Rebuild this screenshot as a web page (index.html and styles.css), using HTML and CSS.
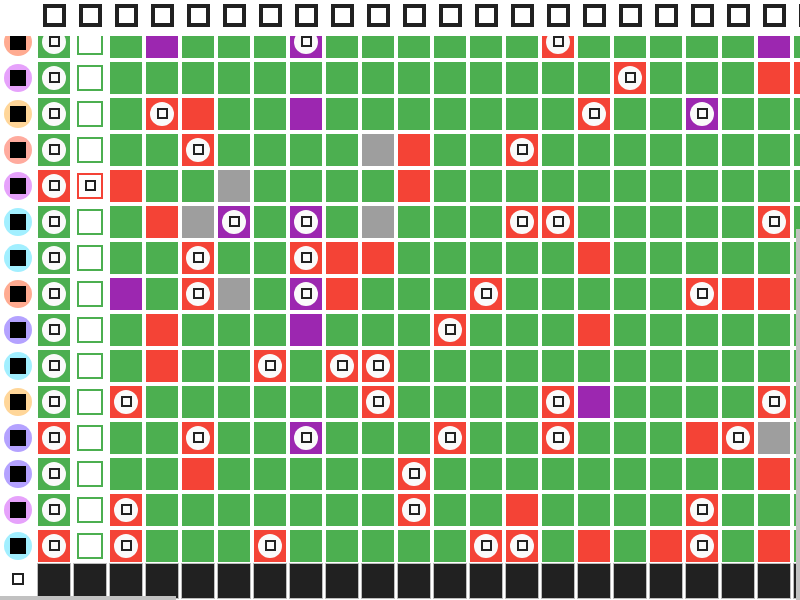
FILE: index.html
```html
<html>
    <head>
        <meta charset="UTF-8">
        <meta name="viewport" content="width=device-width, initial-scale=1.0">
        <title>Grid</title>
        <link rel="stylesheet" href="styles.css">
    </head>
    <body>
        <div id="sheet">
            <div id="head" class="row"></div>
            <div id="viewport">
                <div id="rows"></div>
            </div>
            <div id="foot" class="row"></div>
            <div class="scroll-v"></div>
            <div class="scroll-h"></div>
        </div>
        <script type="text/javascript">
            // avatar colour, first cell, box cell, then the day cells
            // upper case = plain cell, lower case = cell with a badge
            var data = [
                ["salmon", "g", "b", "GPGGGpGGGGGGrGGGGGPG"],
                ["violet", "g", "b", "GGGGGGGGGGGGGGrGGGRR"],
                ["orange", "g", "b", "GrRGGPGGGGGGGrGGpGGG"],
                ["pink",   "g", "b", "GGrGGGGYRGGrGGGGGGGG"],
                ["violet", "r", "x", "RGGYGGGGRGGGGGGGGGGG"],
                ["cyan",   "g", "b", "GRYpGpGYGGGrrGGGGGrG"],
                ["cyan",   "g", "b", "GGrGGrRRGGGGGRGGGGGG"],
                ["salmon", "g", "b", "PGrYGpRGGGrGGGGGrRRG"],
                ["lav",    "g", "b", "GRGGGPGGGrGGGRGGGGGG"],
                ["cyan",   "g", "b", "GRGGrGrrGGGGGGGGGGGG"],
                ["orange", "g", "b", "rGGGGGGrGGGGrPGGGGrG"],
                ["lav",    "r", "b", "GGrGGpGGGrGGrGGGRrYG"],
                ["lav",    "g", "b", "GGRGGGGGrGGGGGGGGGRG"],
                ["violet", "g", "b", "rGGGGGGGrGGRGGGGrGGG"],
                ["cyan",   "r", "b", "rGGGrGGGGGrrGRGRrGRG"]
            ];
            var colours = {g: "green", r: "red", p: "purple", y: "grey"};
            var COLS = 22;

            function el(cls, parent){
                var d = document.createElement("div");
                d.className = cls;
                if(parent) parent.appendChild(d);
                return d;
            }

            function cell(code, parent){
                var slot = el("slot", parent);
                var c = el("cell " + colours[code.toLowerCase()], slot);
                if(code != code.toUpperCase()){
                    var b = el("badge", c);
                    el("mini", b);
                }
            }

            var head = document.getElementById("head");
            el("lead", head);
            for(var i = 0; i < COLS; i++){
                var s = el("slot", head);
                el("hicon", s);
            }

            var rows = document.getElementById("rows");
            data.forEach(function(r){
                var row = el("row", rows);
                var lead = el("lead", row);
                var av = el("avatar " + r[0], lead);
                el("dot", av);
                cell(r[1], row);
                var slot = el("slot", row);
                var box = el("box" + (r[2] == "x" ? " alert" : ""), slot);
                if(r[2] == "x") el("mini", box);
                for(var i = 0; i < r[3].length; i++){
                    cell(r[3][i], row);
                }
            });

            var foot = document.getElementById("foot");
            var fl = el("lead", foot);
            el("ficon", fl);
            for(var i = 0; i < COLS; i++){
                var s = el("slot", foot);
                el("dark", s);
            }
        </script>
    </body>
</html>
```

FILE: styles.css
```css
body{
    margin: 0;
    padding: 0;
    font-family: "Liberation Sans", sans-serif;
    overflow: hidden;
}
#sheet{
    position: relative;
    width: 800px;
    height: 600px;
    overflow: hidden;
    background-color: #fff;
}
.row{
    display: flex;
    height: 36px;
}
.lead{
    flex: 0 0 36px;
    display: flex;
    align-items: center;
    justify-content: center;
}
.slot{
    flex: 0 0 36px;
    display: flex;
    align-items: center;
    justify-content: center;
}
#head .slot{
    align-items: flex-start;
    padding-top: 4px;
    box-sizing: border-box;
}
.hicon{
    width: 23px;
    height: 23px;
    box-sizing: border-box;
    border: 4px solid #212121;
}
#viewport{
    height: 526px;
    overflow: hidden;
}
#rows{
    margin-top: -12px;
}
.cell{
    width: 32px;
    height: 32px;
    display: flex;
    align-items: center;
    justify-content: center;
}
.green{
    background-color: #4caf50;
}
.red{
    background-color: #f44336;
}
.purple{
    background-color: #9c27b0;
}
.grey{
    background-color: #9e9e9e;
}
.badge{
    width: 24px;
    height: 24px;
    border-radius: 50%;
    background-color: #fafafa;
    display: flex;
    align-items: center;
    justify-content: center;
}
.mini{
    width: 11px;
    height: 11px;
    box-sizing: border-box;
    border: 2px solid #212121;
    margin-top: -2px;
}
.box{
    width: 26px;
    height: 26px;
    box-sizing: border-box;
    border: 2px solid #4caf50;
    display: flex;
    align-items: center;
    justify-content: center;
}
.box.alert{
    border-color: #f44336;
}
.box .mini{
    margin-top: -1px;
}
.avatar{
    width: 28px;
    height: 28px;
    border-radius: 50%;
    display: flex;
    align-items: center;
    justify-content: center;
}
.dot{
    width: 16px;
    height: 16px;
    background-color: #000;
}
.salmon{
    background-color: #ffab91;
}
.pink{
    background-color: #ffab9e;
}
.violet{
    background-color: #e6a2fb;
}
.orange{
    background-color: #ffd699;
}
.cyan{
    background-color: #a2efff;
}
.lav{
    background-color: #b4a2ff;
}
#foot{
    height: 38px;
}
#foot .slot{
    align-items: flex-start;
    padding-top: 1px;
    box-sizing: border-box;
}
#foot .lead{
    align-items: flex-start;
    padding-top: 11px;
    box-sizing: border-box;
}
.dark{
    width: 34px;
    height: 36px;
    box-sizing: border-box;
    border: 1px solid #bdbdbd;
    background-color: #212121;
}
.ficon{
    width: 12px;
    height: 12px;
    box-sizing: border-box;
    border: 2px solid #212121;
}
.scroll-v{
    position: absolute;
    right: 0;
    top: 229px;
    width: 4px;
    height: 371px;
    background-color: #c1c1c1;
}
.scroll-h{
    position: absolute;
    left: 0;
    bottom: 0;
    width: 176px;
    height: 4px;
    background-color: #c1c1c1;
}
```
